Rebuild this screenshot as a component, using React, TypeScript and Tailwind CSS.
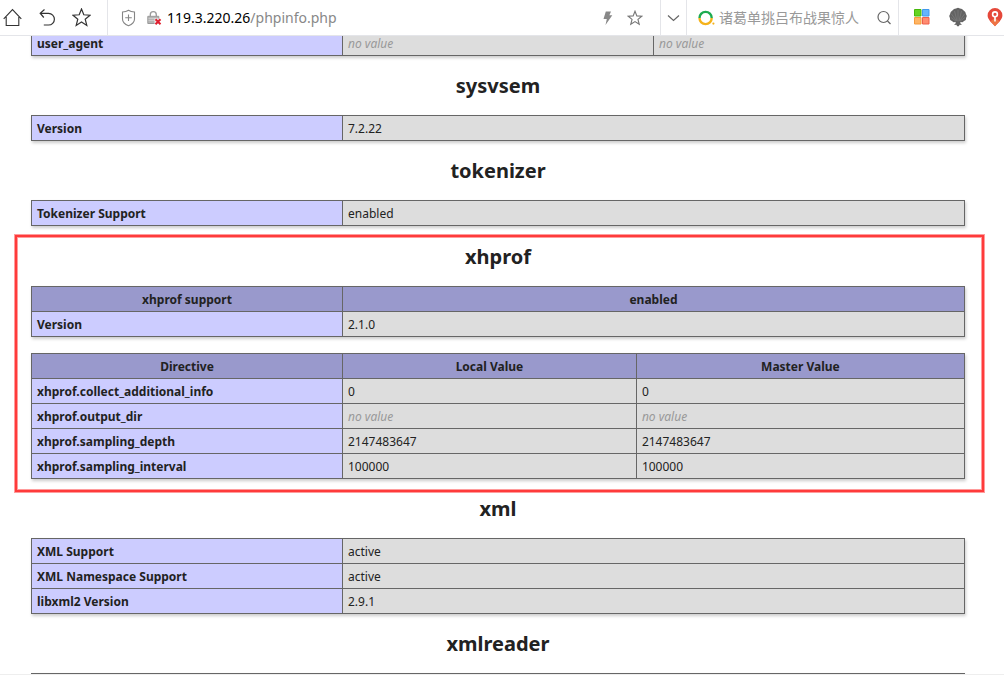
import React from "react";

type Row = { name: string; values: (string | null)[] };

const cell = "border border-[#666] px-[5px] pt-[5px] pb-[3px] align-baseline text-xs leading-4";

function InfoTable({ cols, head, rows }: { cols: string[]; head?: string[]; rows: Row[] }) {
  return (
    <table className="w-full table-fixed border-collapse shadow-[1px_2px_3px_#ccc]">
      <colgroup>
        {cols.map((c, i) => (
          <col key={i} className={c} />
        ))}
      </colgroup>
      {head && (
        <thead>
          <tr className="bg-[#9999cc]">
            {head.map((h) => (
              <th key={h} scope="col" className={`${cell} text-center font-bold`}>
                {h}
              </th>
            ))}
          </tr>
        </thead>
      )}
      <tbody>
        {rows.map((r) => (
          <tr key={r.name}>
            <th scope="row" className={`${cell} bg-[#ccccff] text-left font-bold`}>
              {r.name}
            </th>
            {r.values.map((v, i) => (
              <td key={i} className={`${cell} bg-[#dddddd]`}>
                {v === null ? <i className="text-[#999]">no value</i> : v}
              </td>
            ))}
          </tr>
        ))}
      </tbody>
    </table>
  );
}

function Heading({ children }: { children: React.ReactNode }) {
  return <h2 className="text-center text-xl leading-[27px] font-bold">{children}</h2>;
}

const two = ["w-1/3", "w-2/3"];

function Toolbar() {
  return (
    <header className="flex h-9 shrink-0 items-stretch overflow-hidden border-b border-[#e4e5e9] bg-white">
      <div className="flex w-[108px] shrink-0 items-center gap-4 border-r border-[#e4e5e9] pl-[3px]">
        <button aria-label="Home">
          <svg width="19" height="20" viewBox="0 0 19 20" fill="none" stroke="#333" strokeWidth="1.1">
            <path d="M0.7 10.8 9.5 1.6l8.8 9.2M3.2 9v8.5h12.6V9" />
          </svg>
        </button>
        <button aria-label="Back">
          <svg width="18" height="20" viewBox="0 0 18 20" fill="none" stroke="#333" strokeWidth="1.2">
            <path d="M6.5 1.5 2.2 5.2l3.6 4.3M2.4 5.4h8.2a5.800 5.800 0 0 1 0 11.600H5.8" />
          </svg>
        </button>
        <button aria-label="Favorites">
          <svg width="19" height="20" viewBox="0 0 19 20" fill="none" stroke="#333" strokeWidth="1.2">
            <path d="m9.500 1 2.300 5.800 6.200.4-4.800 4 1.600 6.200-5.300-3.400-5.300 3.400 1.600-6.200-4.800-4 6.200-.4z" />
          </svg>
        </button>
      </div>

      <div className="flex min-w-0 flex-1 items-center pr-[17px] pl-[13px]">
        <svg className="shrink-0" width="15" height="18" viewBox="0 0 15 18" fill="none" stroke="#858585" strokeWidth="1.1">
          <path d="M7.5 1.3C5.8 2.5 3.8 3 1.5 3v7c0 3.4 2.7 5.5 6 6.7 3.3-1.2 6-3.3 6-6.7V3c-2.3 0-4.3-.5-6-1.7z" />
          <path d="M7.5 5.5v6.500M4.200 8.750h6.600" />
        </svg>
        <svg className="ml-[11px] shrink-0" width="15" height="16" viewBox="0 0 15 16">
          <path d="M3.300 7V4.700a3 3 0 0 1 6 0V7" fill="none" stroke="#999" strokeWidth="1.300" />
          <path d="M.8 6.300h11v7.200H.8z" fill="#b5b5b5" stroke="#999" />
          <path d="M1.500 8.500h9.600M1.500 10.500h9.600" stroke="#d0d0d0" strokeWidth=".8" />
          <path d="M7.500 8.500h6.500v6.500H7.500z" fill="#fff" fillOpacity=".7" />
          <path d="m8.500 9.200 5 5m0-5-5 5" stroke="#df1f2f" strokeWidth="2" />
        </svg>
        <div
          role="textbox"
          aria-label="Address"
          tabIndex={0}
          className="ml-[5px] min-w-0 flex-1 truncate text-sm leading-5 text-[#888]"
        >
          <span className="text-black">119.3.220.26</span>/phpinfo.php
        </div>
        <button aria-label="Fast mode" className="mr-[13px]">
          <svg width="13" height="16" viewBox="0 0 13 16" fill="#888">
            <path d="M4.800 1.500h5.200L8.400 5.300h2.900L4.500 15l1.300-6H2.500z" />
          </svg>
        </button>
        <button aria-label="Add to favorites">
          <svg width="16" height="16" viewBox="0 0 19 20" fill="none" stroke="#777" strokeWidth="1.400">
            <path d="m9.500 1.500 2.300 5.800 6.200.4-4.800 4 1.600 6.200-5.300-3.400-5.300 3.400 1.600-6.200-4.800-4 6.200-.4z" />
          </svg>
        </button>
      </div>

      <button
        aria-label="Address history"
        className="flex w-[27px] shrink-0 items-center justify-center border-x border-[#e4e5e9]"
      >
        <svg width="13" height="8" viewBox="0 0 13 8" fill="none" stroke="#666" strokeWidth="1.200">
          <path d="m1 1.500 5.500 5 5.500-5" />
        </svg>
      </button>

      <form className="flex w-[212px] shrink-0 items-center border-r border-[#e4e5e9] pr-1.5 pl-[11px]" onSubmit={(e) => e.preventDefault()}>
        <svg className="shrink-0" width="17" height="16" viewBox="0 0 17 16" fill="none">
          <path d="M1.500 8a6.100 6.100 0 0 1 12.200 0" stroke="#1dab50" strokeWidth="2.400" />
          <path d="M13.700 8a6.100 6.100 0 0 1-12.200 0" stroke="#f5b21a" strokeWidth="2.400" />
          <circle cx="15.400" cy="13.600" r="1.100" fill="#f5b21a" />
        </svg>
        <input
          type="text"
          aria-label="Search"
          placeholder="诸葛单挑吕布战果惊人"
          className="ml-1 min-w-0 flex-1 bg-transparent text-sm leading-5 outline-none placeholder:text-[#999]"
        />
        <button aria-label="Search the web" className="shrink-0">
          <svg width="16" height="16" viewBox="0 0 16 16" fill="none" stroke="#666" strokeWidth="1.200">
            <circle cx="7.500" cy="7" r="5.500" />
            <path d="m11.500 11 3 3" />
          </svg>
        </button>
      </form>

      <div className="flex w-[105px] shrink-0 items-center gap-[18px] pb-0.5 pl-[15px]">
        <button aria-label="Apps" className="shrink-0">
          <svg width="16" height="16" viewBox="0 0 16 16">
            <path d="M.5.5h6.500v6.500H.5z" fill="#65d421" stroke="#45b80a" />
            <path d="M8.500.5H15v6.500H8.500z" fill="#65b4fb" stroke="#4198ec" />
            <path d="M.5 8.500h6.500V15H.5z" fill="#ffb565" stroke="#f59a3c" />
            <path d="M8.500 8.500H15V15H8.500z" fill="#ff8b70" stroke="#ee5f4a" />
          </svg>
        </button>
        <button aria-label="Shell extension" className="shrink-0">
          <svg width="20" height="20" viewBox="0 0 20 20">
            <path
              d="M10 .8 12 1.400l2 .5 1.600 1.500 1.700 1.500.6 2 .9 2-.7 2-.3 2-1.700 1.200-1.600 1.200-2.200-.2.200 1.500 1.500 1.400-2.300-.2-.9 1.500h-1.600l-.9-1.500-2.300.2 1.500-1.400.2-1.500-2.200.2-1.600-1.200-1.700-1.200-.3-2-.7-2 .9-2 .6-2 1.700-1.500L6 1.900l2-.5z"
              fill="#636363"
            />
            <path d="M10 14.500V3M9 14 6.500 4M11 14l2.500-10M8.500 14 3.500 7M11.500 14l5-7M8 14.200 3 10.500M12 14.200l5-3.700" stroke="#858585" strokeWidth=".6" />
          </svg>
        </button>
        <button aria-label="Pin extension" className="shrink-0">
          <svg width="18" height="20" viewBox="0 0 18 20">
            <path d="M9 1a7.400 7.400 0 0 0-7.400 7.400C1.600 12.500 5.500 15 9 19.300c3.500-4.300 7.400-6.800 7.400-10.900A7.400 7.400 0 0 0 9 1z" fill="#e5483a" />
            <path d="M4.300 14.200C6 16 7.600 17.500 9 19.300c1.400-1.800 3-3.300 4.700-5.100L9 11z" fill="#ee7444" />
            <circle cx="9" cy="7.300" r="2.400" fill="none" stroke="#fff" strokeWidth="1.600" />
            <path d="M9 9.500v5" stroke="#fff" strokeWidth="1.600" />
          </svg>
        </button>
      </div>
    </header>
  );
}

export default function App() {
  return (
    <div className="flex h-screen flex-col overflow-hidden border-b border-[#eee] bg-white font-['Noto_Sans','Noto_Sans_CJK_SC',sans-serif] text-[#222]">
      <Toolbar />
      <main className="min-h-0 flex-1 overflow-hidden pr-[39px] pl-[31px]">
        <div className="-mt-1.5 flex flex-col gap-4">
          <InfoTable cols={["w-1/3", "w-1/3", "w-1/3"]} rows={[{ name: "user_agent", values: [null, null] }]} />
          <Heading>sysvsem</Heading>
          <InfoTable cols={two} rows={[{ name: "Version", values: ["7.2.22"] }]} />
          <Heading>tokenizer</Heading>
          <InfoTable cols={two} rows={[{ name: "Tokenizer Support", values: ["enabled"] }]} />

          <section className="-mt-[7px] -mr-[19px] -mb-[13px] -ml-4 flex flex-col gap-4 border-2 border-[#ff3b3b] pt-1.5 pr-[17px] pb-[11px] pl-3.5 shadow-[0_0_0_1px_#ff9c9c,inset_0_0_0_1px_#ff9c9c]">
            <Heading>xhprof</Heading>
            <InfoTable cols={two} head={["xhprof support", "enabled"]} rows={[{ name: "Version", values: ["2.1.0"] }]} />
            <InfoTable
              cols={["w-1/3", "w-[31.5%]", ""]}
              head={["Directive", "Local Value", "Master Value"]}
              rows={[
                { name: "xhprof.collect_additional_info", values: ["0", "0"] },
                { name: "xhprof.output_dir", values: [null, null] },
                { name: "xhprof.sampling_depth", values: ["2147483647", "2147483647"] },
                { name: "xhprof.sampling_interval", values: ["100000", "100000"] },
              ]}
            />
          </section>

          <Heading>xml</Heading>
          <InfoTable
            cols={two}
            rows={[
              { name: "XML Support", values: ["active"] },
              { name: "XML Namespace Support", values: ["active"] },
              { name: "libxml2 Version", values: ["2.9.1"] },
            ]}
          />
          <Heading>xmlreader</Heading>
          <InfoTable cols={two} rows={[{ name: "", values: [""] }]} />
        </div>
      </main>
    </div>
  );
}
